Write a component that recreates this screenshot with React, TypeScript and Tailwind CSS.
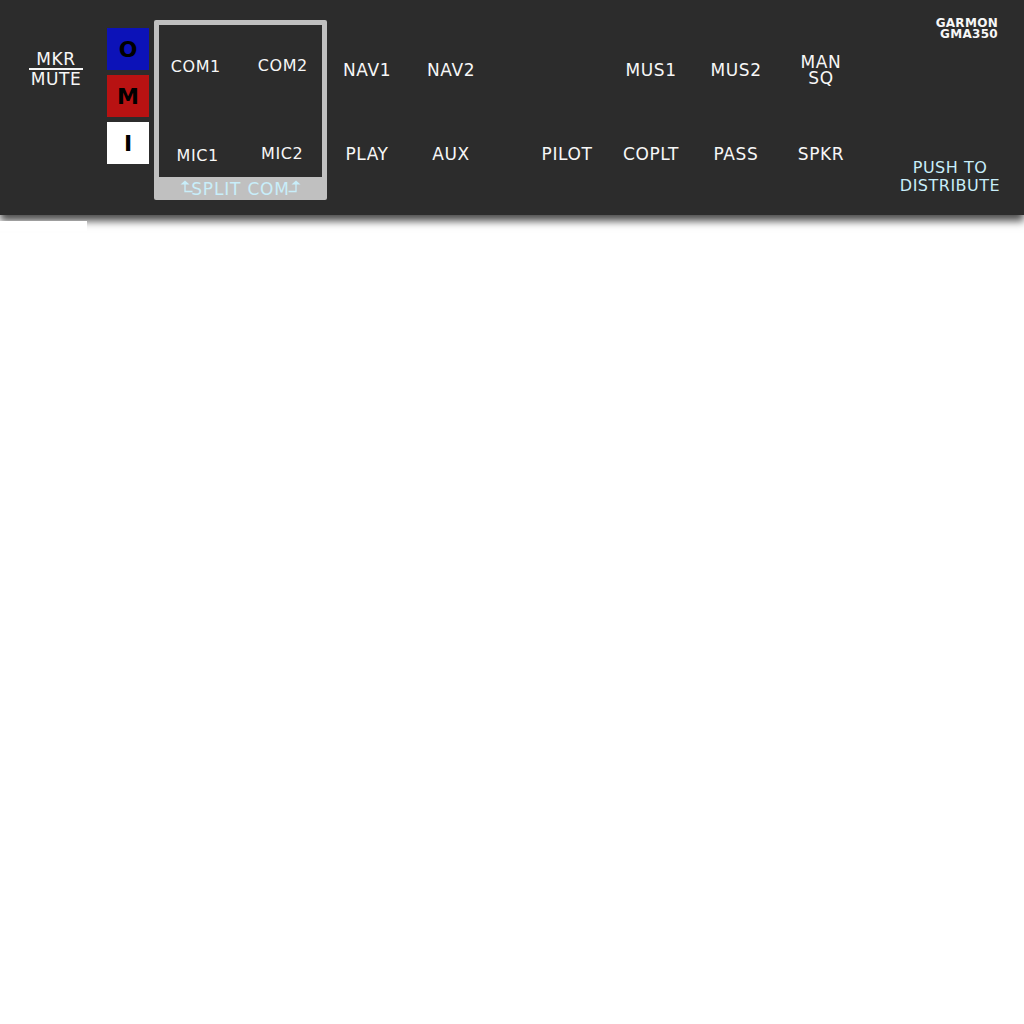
import React from 'react';

// Panneau audio : fond sombre, libellés des touches
const font = "font-['DejaVu_Sans',sans-serif]";

interface ColumnProps {
  top?: React.ReactNode;
  bottom?: React.ReactNode;
  className?: string;
}

const Column: React.FC<ColumnProps> = ({ top, bottom, className }) => {
  return (
    <div className={`flex flex-col items-center pt-[50px] text-[17px] tracking-[0.6px] text-[#f7f7f7] ${className}`}>
      <div className="h-[40px] flex flex-col items-center justify-center leading-[16px] text-center">{top}</div>
      <div className="h-[40px] mt-[45px] flex items-center justify-center">{bottom}</div>
    </div>
  );
};

const Arrow: React.FC<{ flip?: boolean }> = ({ flip }) => (
  <svg width="13" height="13" viewBox="0 0 13 13" className={`-mt-[6px] ${flip ? '-scale-x-100' : ''}`}>
    <path d="M0.5 4.5 L5 0.5 L9.5 4.5 Z" fill="#c8eefa" />
    <path d="M5 4 V11.5 H12.5" stroke="#c8eefa" strokeWidth="1.3" fill="none" />
  </svg>
);

const OmiBox: React.FC<{ letter: string; bg: string }> = ({ letter, bg }) => (
  <div className={`w-[42px] h-[42px] flex items-center justify-center font-bold text-[22px] text-black ${bg}`}>
    {letter}
  </div>
);

export default function App() {
  return (
    <div className={`w-[1024px] h-[1024px] bg-white ${font}`}>
      <div className="relative h-[215px] bg-[#2c2c2c] flex shadow-[0_6px_8px_rgba(0,0,0,0.7)]">
        {/* MKR / MUTE */}
        <div className="w-[107px] pl-[5px] pt-[50px] flex flex-col items-center text-[17px] tracking-[0.6px] text-[#f7f7f7] leading-[18px]">
          <span>MKR</span>
          <div className="w-[54px] h-[2px] bg-[#f7f7f7]" />
          <span>MUTE</span>
        </div>

        {/* O M I */}
        <div className="pt-[28px] flex flex-col gap-[5px]">
          <OmiBox letter="O" bg="bg-[#0c12b8]" />
          <OmiBox letter="M" bg="bg-[#b81212]" />
          <OmiBox letter="I" bg="bg-white" />
        </div>

        {/* Split COM */}
        <div className="ml-[5px] mt-[20px] w-[173px] h-[180px] bg-[#c0c0c0] rounded-[2px] px-[5px] pt-[5px] flex flex-col">
          <div className="h-[152px] bg-[#2c2c2c] grid grid-cols-2 text-[16px] tracking-[0.6px] text-[#f7f7f7]">
            <div className="h-[40px] mt-[22px] pr-[8px] flex items-center justify-center">COM1</div>
            <div className="h-[40px] mt-[21px] pl-[3px] flex items-center justify-center">COM2</div>
            <div className="h-[40px] mt-[48px] pr-[4px] flex items-center justify-center">MIC1</div>
            <div className="h-[40px] mt-[46px] pl-[2px] flex items-center justify-center">MIC2</div>
          </div>
          <div className="h-[23px] pt-[2px] flex items-center justify-center text-[17px] tracking-[0.8px] text-[#c8eefa] leading-none">
            <Arrow />
            <span className="-mx-[2px]">SPLIT COM</span>
            <Arrow flip />
          </div>
        </div>

        <Column className="w-[80px]" top="NAV1" bottom="PLAY" />
        <Column className="w-[88px]" top="NAV2" bottom="AUX" />
        <Column className="w-[30px]" />
        <Column className="w-[84px]" bottom="PILOT" />
        <Column className="w-[84px]" top="MUS1" bottom="COPLT" />
        <Column className="w-[86px]" top="MUS2" bottom="PASS" />
        <Column className="w-[84px]" top={<><span>MAN</span><span>SQ</span></>} bottom="SPKR" />

        {/* Colonne de droite */}
        <div className="flex-1 flex flex-col pl-[13px]">
          <div className="self-end mr-[26px] mt-[18px] flex flex-col items-end font-bold text-[12px] leading-[11px] tracking-[0.3px] text-[#f7f7f7]">
            <span>GARMON</span>
            <span>GMA350</span>
          </div>
          <div className="mt-[119px] flex flex-col items-center text-[16px] tracking-[0.5px] leading-[18px] text-[#c8eefa]">
            <span>PUSH TO</span>
            <span>DISTRIBUTE</span>
          </div>
        </div>
      </div>
      <div className="relative w-[87px] h-[10px] mt-[6px] bg-white" />
    </div>
  );
}
